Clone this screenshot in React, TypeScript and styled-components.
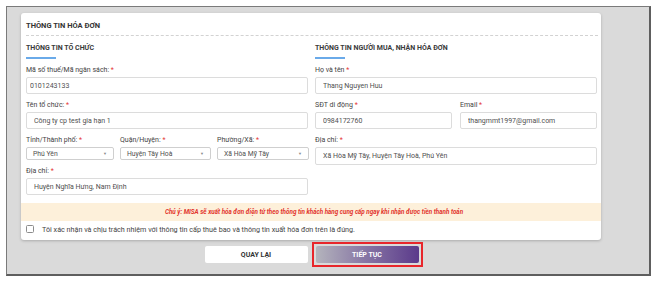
import React from "react";
import styled, { createGlobalStyle } from "styled-components";

const GlobalStyle = createGlobalStyle`
  html, body { margin: 0; padding: 0; background: #ffffff; }
  body { font-family: Roboto, "Liberation Sans", Arial, sans-serif; }
  * { box-sizing: border-box; }
`;

const Page = styled.div`
  width: 656px;
  height: 282px;
  padding: 6px;
  background: #ffffff;
`;

const Frame = styled.div`
  width: 645px;
  height: 270px;
  border: 1px solid #7a7a7a;
  border-right: 2px solid #5e5e5e;
  border-bottom: 2px solid #5e5e5e;
  background: #dadada;
  padding: 6px 0 0 14px;
`;

const Card = styled.div`
  width: 580px;
  background: #ffffff;
  border-radius: 3px;
  box-shadow: 0 1px 3px rgba(0, 0, 0, 0.22);
  padding: 8px 0 3px 0;
`;

const Header = styled.div`
  margin: 0 3px 0 5px;
  font-size: 7.5px;
  font-weight: 700;
  color: #333333;
  line-height: 10px;
  padding-bottom: 4px;
  border-bottom: 1px dashed #d2d2d2;
`;

const Columns = styled.div`
  display: grid;
  grid-template-columns: 282px 282px;
  column-gap: 7px;
  padding: 0 3px 0 5px;
  margin-top: 8px;
`;

const Column = styled.div`
  display: flex;
  flex-direction: column;
`;

const SectionTitle = styled.div`
  font-size: 7px;
  font-weight: 700;
  color: #3a3a3a;
  line-height: 9px;
  &::after {
    content: "";
    display: block;
    width: 30px;
    height: 2px;
    margin-top: 4px;
    background: #6aaae9;
  }
`;

const Field = styled.div`
  display: flex;
  flex-direction: column;
  margin-top: 6px;
  min-width: 0;
`;

const Label = styled.label`
  font-size: 7px;
  line-height: 10px;
  color: #444444;
  margin-bottom: 2px;
  white-space: nowrap;
`;

const Star = styled.span`
  color: #e53935;
`;

const TextInput = styled.input<{ $pad?: number; $h?: number }>`
  width: 100%;
  height: ${(p) => p.$h ?? 17}px;
  border: 1px solid #dcdcdc;
  border-radius: 2px;
  padding: 0 0 0 ${(p) => p.$pad ?? 7}px;
  font-family: Roboto, "Liberation Sans", Arial, sans-serif;
  font-size: 7px;
  color: #505050;
  background: #ffffff;
  outline: none;
`;

const SelectBox = styled.div`
  height: 13px;
  border: 1px solid #cfcfcf;
  border-radius: 2px;
  padding: 0 6px 0 6px;
  display: flex;
  align-items: center;
  justify-content: space-between;
  font-size: 6.8px;
  color: #505050;
  background: #ffffff;
`;

const Arrow = styled.span`
  font-size: 4px;
  color: #8a8a8a;
`;

const Triple = styled.div`
  display: grid;
  grid-template-columns: 88px 91px 92px;
  column-gap: 6px;
`;

const Double = styled.div`
  display: grid;
  grid-template-columns: 137px 137px;
  column-gap: 8px;
`;

const Notice = styled.div`
  margin-top: 8px;
  height: 18px;
  line-height: 18px;
  background: #fdf0da;
  color: #e2342c;
  font-style: italic;
  font-weight: 700;
  font-size: 6.3px;
  text-align: center;
  padding-left: 6px;
`;

const ConfirmRow = styled.label`
  height: 16px;
  display: flex;
  align-items: center;
  padding-left: 5px;
  font-size: 7.2px;
  color: #444444;
`;

const Check = styled.span`
  width: 8px;
  height: 8px;
  border: 1px solid #8c8c8c;
  border-radius: 1.5px;
  margin-right: 8px;
  background: #ffffff;
  flex-shrink: 0;
`;

const Actions = styled.div`
  width: 580px;
  display: flex;
  justify-content: center;
  align-items: center;
  gap: 4px;
  margin-top: 2px;
  padding-left: 5px;
`;

const Highlight = styled.div`
  border: 2px solid #e8262b;
  padding: 2px;
  display: flex;
`;

const Button = styled.button<{ $primary?: boolean }>`
  width: 103px;
  height: 17px;
  border: none;
  border-radius: 2px;
  font-family: Roboto, "Liberation Sans", Arial, sans-serif;
  font-size: 7px;
  font-weight: 700;
  color: ${(p) => (p.$primary ? "#ffffff" : "#333333")};
  background: ${(p) =>
    p.$primary ? "linear-gradient(90deg, #b4b4bc 0%, #8a7aa6 45%, #5b3a8b 100%)" : "#ffffff"};
  padding: 0;
`;

const Req = ({ children }: { children: React.ReactNode }) => (
  <Label>
    {children} <Star>*</Star>
  </Label>
);

const Select = ({ value }: { value: string }) => (
  <SelectBox>
    <span>{value}</span>
    <Arrow>▼</Arrow>
  </SelectBox>
);

export default function App() {
  return (
    <>
      <GlobalStyle />
      <Page>
        <Frame>
          <Card>
            <Header>THÔNG TIN HÓA ĐƠN</Header>
            <Columns>
              <Column>
                <SectionTitle>THÔNG TIN TỔ CHỨC</SectionTitle>
                <Field>
                  <Req>Mã số thuế/Mã ngân sách:</Req>
                  <TextInput $pad={3} readOnly value="0101243133" />
                </Field>
                <Field>
                  <Req>Tên tổ chức:</Req>
                  <TextInput readOnly value="Công ty cp test gia hạn 1" />
                </Field>
                <Triple>
                  <Field>
                    <Req>Tỉnh/Thành phố:</Req>
                    <Select value="Phú Yên" />
                  </Field>
                  <Field>
                    <Req>Quận/Huyện:</Req>
                    <Select value="Huyện Tây Hoà" />
                  </Field>
                  <Field>
                    <Req>Phường/Xã:</Req>
                    <Select value="Xã Hòa Mỹ Tây" />
                  </Field>
                </Triple>
                <Field>
                  <Req>Địa chỉ:</Req>
                  <TextInput readOnly value="Huyện Nghĩa Hưng, Nam Định" />
                </Field>
              </Column>
              <Column>
                <SectionTitle>THÔNG TIN NGƯỜI MUA, NHẬN HÓA ĐƠN</SectionTitle>
                <Field>
                  <Req>Họ và tên</Req>
                  <TextInput readOnly value="Thang Nguyen Huu" />
                </Field>
                <Double>
                  <Field>
                    <Req>SĐT di động</Req>
                    <TextInput readOnly value="0984172760" />
                  </Field>
                  <Field>
                    <Req>Email</Req>
                    <TextInput readOnly value="thangmmt1997@gmail.com" />
                  </Field>
                </Double>
                <Field>
                  <Req>Địa chỉ:</Req>
                  <TextInput $h={18} readOnly value="Xã Hòa Mỹ Tây, Huyện Tây Hoà, Phú Yên" />
                </Field>
              </Column>
            </Columns>
            <Notice>
              Chú ý: MISA sẽ xuất hóa đơn điện tử theo thông tin khách hàng cung cấp ngay khi nhận được tiền thanh toán
            </Notice>
            <ConfirmRow>
              <Check />
              Tôi xác nhận và chịu trách nhiệm với thông tin cấp thuê bao và thông tin xuất hóa đơn trên là đúng.
            </ConfirmRow>
          </Card>
          <Actions>
            <Button>QUAY LẠI</Button>
            <Highlight>
              <Button $primary>TIẾP TỤC</Button>
            </Highlight>
          </Actions>
        </Frame>
      </Page>
    </>
  );
}
